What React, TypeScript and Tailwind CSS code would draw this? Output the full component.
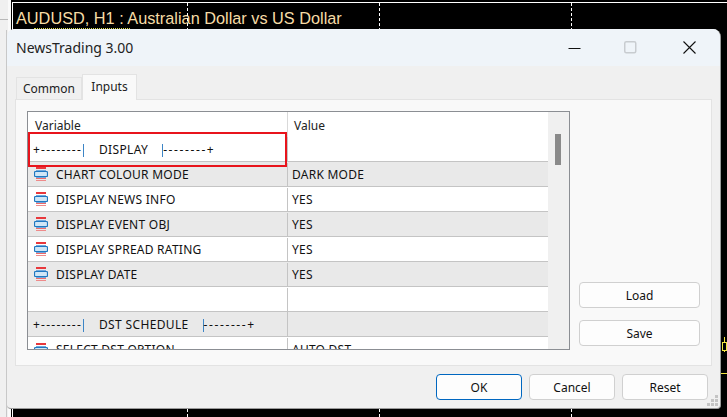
import React from "react";

const uiFont = { fontFamily: '"Noto Sans", "Open Sans", sans-serif' };

type Row = { name: string; value: string; icon?: boolean };

const rows: Row[] = [
  { name: "CHART COLOUR MODE", value: "DARK MODE", icon: true },
  { name: "DISPLAY NEWS INFO", value: "YES", icon: true },
  { name: "DISPLAY EVENT OBJ", value: "YES", icon: true },
  { name: "DISPLAY SPREAD RATING", value: "YES", icon: true },
  { name: "DISPLAY DATE", value: "YES", icon: true },
  { name: "", value: "" },
];

const ParamIcon = () => (
  <svg width="14" height="15" viewBox="0 0 14 15" className="shrink-0">
    <rect x="2" y="0" width="10" height="2" fill="#e8383c" />
    <rect x="2" y="3" width="10" height="1" fill="#6fa8dc" />
    <rect x="0.5" y="4.5" width="13" height="5" rx="1" fill="#cfe6f7" stroke="#1f78c1" strokeWidth="1.2" />
    <rect x="2" y="10" width="10" height="1" fill="#6fa8dc" />
    <rect x="2" y="11" width="10" height="1" fill="#ee6a6a" />
    <rect x="2" y="13" width="10" height="1" fill="#ee8a8a" />
  </svg>
);

// "+--------| LABEL |--------+" group header in the list
const Separator = ({ label }: { label: string }) => (
  <div className="flex items-center pt-[2px] text-[12px] text-[#111]">
    <span className="w-[50px] tracking-[1.25px]">+--------</span>
    <span className="h-[13px] w-[1px] bg-[#3d85c6]" />
    <span className="ml-[15px] mr-[14px] tracking-[0.35px]">{label}</span>
    <span className="h-[13px] w-[1px] bg-[#3d85c6]" />
    <span className="tracking-[1.6px]">--------+</span>
  </div>
);

const DialogButton = ({ label, className }: { label: string; className: string }) => (
  <button
    className={`flex h-[26px] items-center justify-center rounded-[4px] border bg-[#fdfdfd] pt-[1px] text-[12px] text-[#111] ${className}`}
  >
    {label}
  </button>
);

const App: React.FC = () => {
  return (
    <div className="relative h-[417px] w-[727px] overflow-hidden bg-[#f0f0f0]" style={uiFont}>
      {/* bits of the terminal to the left of the chart */}
      <div className="absolute top-0 left-[8px] h-full w-[3px] bg-[#fafafa]" />
      <div className="absolute top-[19px] left-0 h-[1px] w-[8px] bg-[#b8b8b8]" />
      <div className="absolute top-[30px] left-[6px] h-full w-[1px] bg-[#c8c8c8]" />

      {/* chart behind the dialog */}
      <div className="absolute top-0 left-[11px] right-0 bottom-0 bg-black">
        <div className="absolute top-[2px] left-[1px] right-0 bottom-0 border-t border-l border-white">
          <div
            className="pl-[3px] pt-[4px] text-[16.3px] leading-[22px] text-[#f6dca6]"
            style={{ fontFamily: '"Liberation Sans", sans-serif' }}
          >
            AUDUSD, H1 : Australian Dollar vs US Dollar
          </div>
          {/* tops of the indicator label, mostly hidden by the dialog */}
          <div className="absolute top-[25px] left-[21px] w-[96px] border-t border-dotted border-[#d8d84a]" />
          <div className="absolute top-0 left-[174px] h-full border-l border-dashed border-white" />
          <div className="absolute top-0 left-[366px] h-full border-l border-dashed border-white" />
          <div className="absolute top-0 left-[558px] h-full border-l border-dashed border-white" />
          <div className="absolute top-[334px] right-[2px] h-[15px] w-[1px] bg-[#f5e642]" />
          <div className="absolute top-[339px] right-0 h-[9px] w-[5px] border border-[#f5e642] bg-black" />
          <div className="absolute top-[370px] right-0 h-[1px] w-[6px] bg-[#f5e642]" />
        </div>
      </div>

      {/* settings dialog */}
      <div className="absolute top-[29px] left-[7px] flex h-[380px] w-[714px] flex-col overflow-hidden rounded-t-[8px] rounded-b-[4px] border-r border-b border-[#9a9a9a] bg-[#f0f0f0]">
        <div className="flex h-[37px] shrink-0 items-center justify-between bg-[#eff4f9] pl-[9px]">
          <span className="text-[14px] text-[#222]">NewsTrading 3.00</span>
          <div className="flex items-center">
            <svg width="14" height="14" viewBox="0 0 14 14" className="mr-[43px]">
              <path d="M1.5 7.5h12" stroke="#111" strokeWidth="1" />
            </svg>
            <svg width="13" height="13" viewBox="0 0 13 13" className="mr-[46px]">
              <rect x="0.75" y="0.75" width="11" height="11" rx="1.5" fill="none" stroke="#c8ccd0" strokeWidth="1.5" />
            </svg>
            <svg width="13" height="13" viewBox="0 0 13 13" className="mr-[24px]">
              <path d="M0.5 0.5l12 12M12.5 0.5l-12 12" stroke="#111" strokeWidth="1.1" />
            </svg>
          </div>
        </div>

        <div className="flex flex-1 flex-col pt-[8px] pl-[8px] pr-[8px]">
          <div className="flex h-[25px] items-end pl-[1px]">
            <div className="flex h-[22px] w-[66px] items-center justify-center border border-b-0 border-[#e3e3e3] bg-[#f0f0f0] text-[12px] text-[#222]">
              Common
            </div>
            <div className="z-10 -mb-[1px] flex h-[26px] w-[55px] items-center justify-center border border-b-0 border-[#e3e3e3] bg-[#f9f9f9] pb-[2px] text-[12px] text-[#222]">
              Inputs
            </div>
          </div>

          <div className="flex h-[267px] gap-[9px] border border-[#e3e3e3] bg-[#f9f9f9] pt-[11px] pl-[11px] pr-[11px]">
            <div className="relative flex h-[239px] w-[544px] overflow-hidden border border-[#8b8e93] bg-white">
              <div className="flex w-[520px] shrink-0 flex-col">
                <div className="flex h-[25px] shrink-0 text-[12px] text-[#222]">
                  <div className="w-[259px] pl-[7px] pt-[5px]">Variable</div>
                  <div className="flex-1 border-l border-[#d9d9d9] pl-[6px] pt-[5px]">Value</div>
                </div>
                <div className="flex h-[25px] shrink-0 border-b border-[#c4c4c4]">
                  <div className="flex w-[259px] items-center pl-[5px]">
                    <Separator label="DISPLAY" />
                  </div>
                  <div className="flex-1 border-l border-[#c4c4c4]" />
                </div>
                {rows.map((row, i) => (
                  <div
                    key={i}
                    className={`flex h-[25px] shrink-0 border-b border-[#c4c4c4] pt-[1px] text-[12px] tracking-[0.25px] text-[#111] ${
                      i % 2 === 0 ? "bg-[#e9e9e9]" : "bg-white"
                    }`}
                  >
                    <div className="flex w-[259px] items-center pl-[6px]">
                      {row.icon && <ParamIcon />}
                      {row.icon && <span className="ml-[8px]">{row.name}</span>}
                    </div>
                    <div className="flex flex-1 items-center border-l border-[#c4c4c4] pl-[4px]">{row.value}</div>
                  </div>
                ))}
                <div className="flex h-[25px] shrink-0 border-b border-[#c4c4c4] bg-[#e9e9e9]">
                  <div className="flex w-[259px] items-center pl-[5px]">
                    <Separator label="DST SCHEDULE" />
                  </div>
                  <div className="flex-1 border-l border-[#c4c4c4]" />
                </div>
                <div className="flex h-[25px] shrink-0 pt-[1px] text-[12px] tracking-[0.25px] text-[#111]">
                  <div className="flex w-[259px] items-center pl-[6px]">
                    <ParamIcon />
                    <span className="ml-[8px]">SELECT DST OPTION</span>
                  </div>
                  <div className="flex flex-1 items-center border-l border-[#c4c4c4] pl-[4px]">AUTO DST</div>
                </div>
              </div>
              <div className="relative flex-1 bg-[#f0f0f0]">
                <div className="absolute top-[22px] left-[7px] h-[31px] w-[6px] bg-[#8a8a8a]" />
              </div>
              {/* red annotation round the first group */}
              <div className="absolute top-[20px] left-0 h-[35px] w-[259px] border-[2px] border-[#e8141c]" />
            </div>

            <div className="flex flex-col gap-[12px] pt-[171px]">
              <DialogButton label="Load" className="w-[121px] border-[#d0d0d0]" />
              <DialogButton label="Save" className="w-[121px] border-[#d0d0d0]" />
            </div>
          </div>

          <div className="flex justify-end gap-[7px] pt-[8px] pr-[4px]">
            <DialogButton label="OK" className="w-[86px] border-[#0067c0]" />
            <DialogButton label="Cancel" className="w-[86px] border-[#d0d0d0]" />
            <DialogButton label="Reset" className="w-[86px] border-[#d0d0d0]" />
          </div>
        </div>

        {/* resize grip */}
        <svg width="12" height="12" viewBox="0 0 12 12" className="absolute right-[1px] bottom-[1px]">
          <rect x="8" y="0" width="3" height="3" fill="#c4c4c4" />
          <rect x="4" y="4" width="3" height="3" fill="#c4c4c4" />
          <rect x="8" y="4" width="3" height="3" fill="#c4c4c4" />
          <rect x="0" y="8" width="3" height="3" fill="#c4c4c4" />
          <rect x="4" y="8" width="3" height="3" fill="#c4c4c4" />
          <rect x="8" y="8" width="3" height="3" fill="#c4c4c4" />
        </svg>
      </div>
    </div>
  );
};

export default App;
